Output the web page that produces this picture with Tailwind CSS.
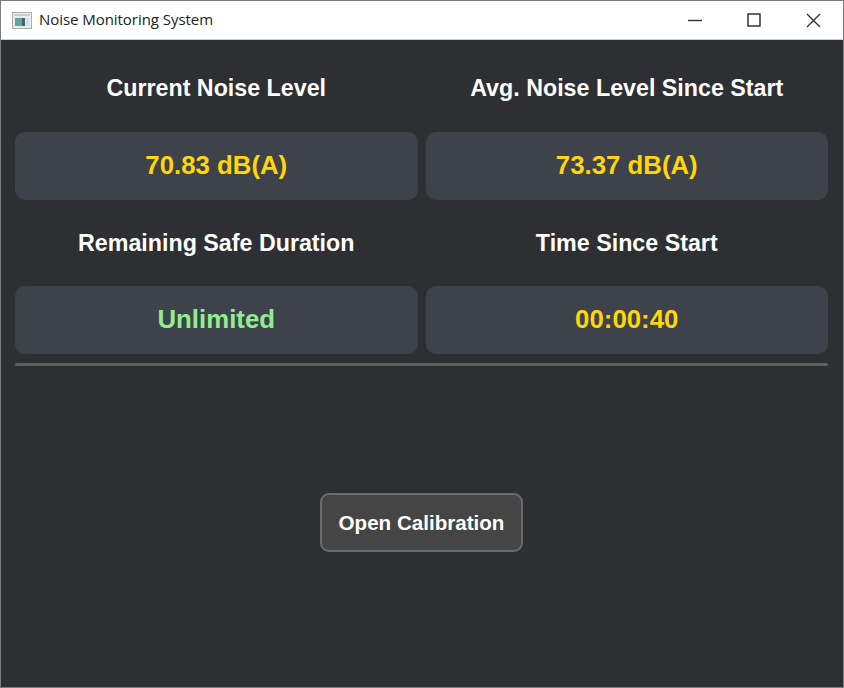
<!doctype html>
<html>
<head>
<meta charset="utf-8">
<script src="https://cdn.jsdelivr.net/npm/@tailwindcss/browser@4"></script>
</head>
<body class="bg-[#2d2f33]">
<div class="w-[844px] h-[688px] flex flex-col overflow-hidden bg-[#2d2f33] border border-[#7c7c7c] font-['Liberation_Sans',sans-serif]">
  <div class="h-[39px] shrink-0 bg-white flex items-center border-b border-[#d0d0d0]">
    <svg class="ml-[11px] w-[20px] h-[17px] shrink-0" viewBox="0 0 20 17">
      <rect x="0.5" y="0.5" width="19" height="16" fill="#e8edf0" stroke="#a8aeb4"/>
      <rect x="2" y="2" width="16" height="2" fill="#c4ccd4"/>
      <rect x="3" y="6" width="7" height="8" fill="#5fa5a3"/>
      <rect x="10" y="6" width="3" height="8" fill="#3d6670"/>
      <rect x="14" y="6" width="3" height="8" fill="#d8dde2"/>
    </svg>
    <span class="ml-[7px] pb-[2px] text-[15px] text-[#222] font-['Open_Sans',sans-serif] leading-none tracking-[-0.05px]">Noise Monitoring System</span>
    <div class="ml-auto flex items-center h-full">
      <div class="w-[59px] h-full flex items-center justify-center">
        <svg class="w-[14px] h-[14px]" viewBox="0 0 14 14"><path d="M0 7.5H14" stroke="#333" stroke-width="1.4"/></svg>
      </div>
      <div class="w-[59px] h-full flex items-center justify-center">
        <svg class="w-[14px] h-[14px]" viewBox="0 0 14 14"><rect x="1" y="1" width="12" height="12" fill="none" stroke="#333" stroke-width="1.5"/></svg>
      </div>
      <div class="w-[60px] h-full flex items-center justify-center">
        <svg class="w-[15px] h-[15px]" viewBox="0 0 15 15"><path d="M1 1L14 14M14 1L1 14" stroke="#333" stroke-width="1.4"/></svg>
      </div>
    </div>
  </div>
  <div class="flex-1 flex flex-col pl-[14px] pr-[15px]">
    <div class="grid grid-cols-2 gap-x-[8px]">
      <div class="h-[92px] flex items-center justify-center text-white font-bold text-[23.25px] leading-none pt-[6px]">Current Noise Level</div>
      <div class="h-[92px] flex items-center justify-center text-white font-bold text-[23.25px] leading-none pt-[6px]">Avg. Noise Level Since Start</div>
      <div class="h-[68px] rounded-[10px] bg-[#3e424b] flex items-center justify-center text-[#ffd60a] font-bold text-[25.8px] leading-none pb-[1px]">70.83 dB(A)</div>
      <div class="h-[68px] rounded-[10px] bg-[#3e424b] flex items-center justify-center text-[#ffd60a] font-bold text-[25.8px] leading-none pb-[1px]">73.37 dB(A)</div>
      <div class="h-[86px] flex items-center justify-center text-white font-bold text-[23.25px] leading-none pt-[1px]">Remaining Safe Duration</div>
      <div class="h-[86px] flex items-center justify-center text-white font-bold text-[23.25px] leading-none pt-[1px]">Time Since Start</div>
      <div class="h-[68px] rounded-[10px] bg-[#3e424b] flex items-center justify-center text-[#90ee90] font-bold text-[25.8px] leading-none pb-[1px]">Unlimited</div>
      <div class="h-[68px] rounded-[10px] bg-[#3e424b] flex items-center justify-center text-[#ffd60a] font-bold text-[25.8px] leading-none pb-[1px]">00:00:40</div>
    </div>
    <div class="h-[3px] mt-[9px] bg-[#5f6062] rounded-full"></div>
    <div class="flex justify-center mt-[127px]">
      <button class="w-[203px] h-[59px] rounded-[9px] bg-[#454545] border-2 border-[#6a6b6d] text-white font-bold text-[20.6px] leading-none pt-[1px]">Open Calibration</button>
    </div>
  </div>
</div>
</body>
</html>
